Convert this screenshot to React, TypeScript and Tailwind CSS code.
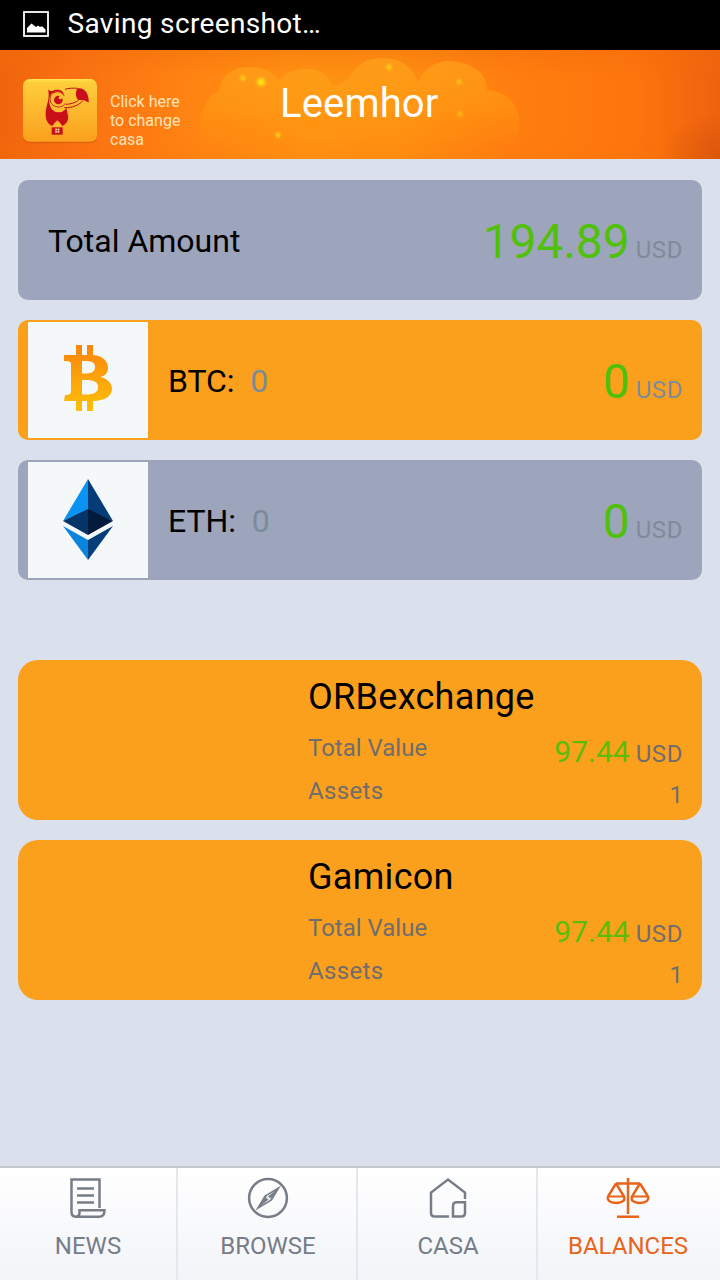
import type { ReactNode } from "react";

function StatusBar() {
  return (
    <div className="flex h-[50px] shrink-0 items-center bg-black pl-[23px] text-white">
      <svg width="26" height="26" viewBox="0 0 26 26" className="mt-[-2px]">
        <rect x="1" y="1" width="24" height="24" fill="none" stroke="#fff" strokeWidth="1.8" />
        <path d="M4 21.5V17l4.500-4.500 4.500 3.500 2-1.500 2 1.500 2-.7 3.500 3.200v3Z" fill="#fff" />
      </svg>
      <span className="mt-[-3px] ml-[18.500px] text-[28px] leading-[34px] tracking-[0.35px] whitespace-nowrap">
        Saving screenshot…
      </span>
    </div>
  );
}

function Toucan() {
  return (
    <svg width="78" height="68" viewBox="33 21 234 204" className="-ml-[2px] block shrink-0">
      <defs>
        <linearGradient id="tile" x1="0" y1="0" x2="0" y2="1">
          <stop offset="0" stopColor="#ffdc3c" />
          <stop offset="0.08" stopColor="#fdcb3b" />
          <stop offset="1" stopColor="#fba01d" />
        </linearGradient>
      </defs>
      <rect x="39" y="33" width="222" height="187" rx="20" fill="#b84a08" opacity="0.35" />
      <rect x="39" y="27" width="222" height="188" rx="20" fill="url(#tile)" />
      <path d="M55 29.500H245" stroke="#ffe75a" strokeWidth="3" />
      <g fill="#c9101a">
        <path d="M114 57c3 5 7 7 13 6 8-4 22-6 31 2l5 9c-8-8-19-12-28-9-14 5-19 18-16 31 3 17 16 24 32 21 8-1 14-4 18-8 1 20 11 33 2 47-4 6-9 9-14 12l-7-10-8-7-8 7-7 10c-13-5-19-16-20-30-1-28 9-42 9-60 0-8 0-13-2-21Z" />
        <ellipse cx="146" cy="97" rx="28" ry="30" fill="#fdbd33" />
        <path d="M124 74c-9 17-1 32 15 36 13 3 23-2 26-10" fill="none" stroke="#c9101a" strokeWidth="2.500" />
        <circle cx="145" cy="90" r="13" />
        <circle cx="151" cy="83" r="5" fill="#fdc837" />
        <path d="M128 71c10-9 27-8 34 6" fill="none" stroke="#c9101a" strokeWidth="3" />
        <path d="M201 56c22-6 37 16 35 42-10-8-19-9-32-8l-5-9c-2-9-2-16 2-25Z" />
        <path d="M165 58c11-4 26-4 38-3M167 103c16 0 31-6 38-12M163 113c24 1 42-7 55-20" fill="none" stroke="#c9101a" strokeWidth="3" />
        <path d="M125 172h33v22h-33Z" />
        <path d="m125 171 17-14 16 14Z" fill="#fdb92f" />
        <rect x="136" y="176" width="12" height="12" fill="#fff0b0" />
        <path d="M142 175v14M135 182h14" stroke="#c9101a" strokeWidth="2" />
      </g>
    </svg>
  );
}

function Header() {
  return (
    <header className="relative h-[109px] shrink-0 overflow-hidden bg-[linear-gradient(90deg,#ef650d_0%,#fa7012_10%,#ff8412_27%,#ff9212_42%,#ff9012_55%,#ff7f10_70%,#fd750d_88%,#ee620f_100%)] text-white">
      <svg width="720" height="109" viewBox="0 50 720 109" className="absolute inset-0">
        <defs>
          <linearGradient id="cloud" x1="0" y1="0" x2="0" y2="1">
            <stop offset="0" stopColor="#ffa71e" stopOpacity="0.6" />
            <stop offset="0.5" stopColor="#ffa414" stopOpacity="0.38" />
            <stop offset="0.9" stopColor="#ff940c" stopOpacity="0" />
          </linearGradient>
          <radialGradient id="glow">
            <stop offset="0" stopColor="#fff01c" />
            <stop offset="0.4" stopColor="#ffdc18" stopOpacity="0.75" />
            <stop offset="1" stopColor="#ffb414" stopOpacity="0" />
          </radialGradient>
          <linearGradient id="shade" x1="0" y1="0" x2="0" y2="1">
            <stop offset="0" stopColor="#ef6908" stopOpacity="0.35" />
            <stop offset="0.25" stopColor="#ef6908" stopOpacity="0" />
            <stop offset="0.8" stopColor="#f87000" stopOpacity="0" />
            <stop offset="1" stopColor="#f87000" stopOpacity="0.15" />
          </linearGradient>
          <radialGradient id="corner">
            <stop offset="0" stopColor="#cc4e0c" stopOpacity="0.6" />
            <stop offset="1" stopColor="#cc4e0c" stopOpacity="0" />
          </radialGradient>
        </defs>
        <rect y="50" width="720" height="109" fill="url(#shade)" />
        <ellipse cx="720" cy="158" rx="60" ry="45" fill="url(#corner)" />
        <path
          d="M210 159C196 146 194 103 219 91Q222 67 249 67Q272 67 278 81Q288 69 308 69Q325 69 333 86Q343 85 351 76Q360 58 382 58Q410 58 418 83Q427 61 450 61Q486 64 487 90Q513 91 519 117Q519 146 506 159Z"
          fill="url(#cloud)"
        />
        <circle cx="261" cy="82" r="7" fill="url(#glow)" />
        <circle cx="243" cy="78" r="5" fill="url(#glow)" opacity="0.65" />
        <circle cx="278" cy="135" r="4.500" fill="url(#glow)" opacity="0.7" />
        <circle cx="389" cy="67" r="5" fill="url(#glow)" opacity="0.6" />
        <circle cx="459" cy="82" r="5" fill="url(#glow)" opacity="0.5" />
        <circle cx="460" cy="114" r="5" fill="url(#glow)" opacity="0.4" />
      </svg>
      <div className="relative flex h-full items-start pl-[23px]">
        <div className="mt-[27px]">
          <Toucan />
        </div>
        <p className="mt-[42px] ml-[11px] w-[90px] text-[16px] leading-[19px] text-[#ffe4b8]">
          Click here
          <br />
          to change
          <br />
          casa
        </p>
        <h1 className="mt-[30px] ml-[80px] text-[40px] leading-[48px] tracking-[0.15px]">Leemhor</h1>
      </div>
    </header>
  );
}

function Amount({ value }: { value: string }) {
  return (
    <div className="ml-auto flex items-baseline pt-[3px] pr-[19px]">
      <span className="text-[48px] leading-[56px] tracking-[-0.1px] text-[#50c008]">{value}</span>
      <span className="ml-[6px] text-[24px] tracking-[0.6px] text-[#7d8b9a]">USD</span>
    </div>
  );
}

function CoinRow({ name, tone, icon }: { name: string; tone: string; icon: ReactNode }) {
  return (
    <section className={`flex h-[120px] items-center rounded-[10px] ${tone}`}>
      <div className="ml-[10px] flex h-[116px] w-[120px] items-center justify-center bg-[#f4f8f9]">{icon}</div>
      <div className="mt-[2px] ml-[20px] flex text-[32px] leading-[38px]">
        <span className="tracking-[-0.1px] text-black">{name}:</span>
        <span className="ml-[16px] text-[#7b8b98]">0</span>
      </div>
      <Amount value="0" />
    </section>
  );
}

function Bitcoin() {
  return (
    <svg width="50" height="68" viewBox="0 0 50 68" className="mt-[-4px]">
      <defs>
        <linearGradient id="btc" x1="0" y1="0" x2="0" y2="1">
          <stop offset="0" stopColor="#fb850b" />
          <stop offset="1" stopColor="#fcc009" />
        </linearGradient>
      </defs>
      <path
        fill="url(#btc)"
        fillRule="evenodd"
        d="M13 1h6v10h5V1h6v10C41 12 45 18 45 24c0 5-3 8-8 9 7 1 12 6 12 12 0 7-7 12-19 12v10h-6V57h-5v10h-6V57H1l1-6c5 0 6-1 6-5V20c0-2-1-3-7-3v-6h12ZM19 17v12.500h3c7 0 10-2 10-6.500 0-4-3-6-9-6ZM19 36v14.500h4c8 0 12-2 12-7.500 0-5-4-7-12-7Z"
      />
    </svg>
  );
}

function Ethereum() {
  return (
    <svg width="50" height="82" viewBox="0 0 50 82">
      <path fill="#0b93f3" d="M25 0 0 42l25-11Z" />
      <path fill="#043c78" d="m25 0 25 42-25-11Z" />
      <path fill="#043468" d="m0 42 25-12v26Z" />
      <path fill="#021a3c" d="m50 42-25-12v26Z" />
      <path fill="#0b84de" d="m0 47 25 14v20Z" />
      <path fill="#043e79" d="M50 47 25 61v20Z" />
    </svg>
  );
}

function AssetCard({ name }: { name: string }) {
  return (
    <section className="h-[160px] rounded-[20px] bg-[#fba01d] pr-[19px] pl-[290px] text-[24px] text-[#716d6c]">
      <h2 className="pt-[15px] text-[36px] leading-[44px] tracking-[0.3px] text-black">{name}</h2>
      <div className="flex justify-between">
        <div>
          <div className="mt-[14px] leading-[30px]">Total Value</div>
          <div className="mt-[13px] leading-[30px] tracking-[0.35px]">Assets</div>
        </div>
        <div className="text-right">
          <div className="mt-[14px] flex items-baseline leading-[38px]">
            <span className="text-[30px] text-[#5cbd08]">97.44</span>
            <span className="ml-[6px] tracking-[0.6px]">USD</span>
          </div>
          <div className="mt-[7px] leading-[30px]">1</div>
        </div>
      </div>
    </section>
  );
}

function NavItem({ label, icon, className }: { label: string; icon: ReactNode; className: string }) {
  return (
    <a className={`flex shrink-0 flex-col items-center pt-[9px] ${className}`}>
      {icon}
      <span className="mt-[12px] text-[24px] leading-[30px]">{label}</span>
    </a>
  );
}

const stroke = {
  width: 44,
  height: 42,
  viewBox: "0 0 44 42",
  fill: "none",
  stroke: "currentColor",
  strokeWidth: 2.5,
};

function BottomNav() {
  return (
    <nav className="flex h-[114px] shrink-0 border-t-2 border-[#c4c8cd] bg-gradient-to-b from-white to-[#f2f4f8]">
      <NavItem
        label="NEWS"
        className="w-[178px] border-r-2 border-[#e4e7ee] text-[#777d87]"
        icon={
          <svg {...stroke}>
            <path d="M33.500 31V2.500H5.500V35q0 4.700 4.500 4.700H33q5.500 0 5.500-6.500H13.500v2.500q0 4-4 4M11 11.500h17M11 18.500h17M11 25.500h17" />
          </svg>
        }
      />
      <NavItem
        label="BROWSE"
        className="w-[180px] border-r-2 border-[#e4e7ee] pl-[2px] text-[#777d87]"
        icon={
          <svg {...stroke}>
            <circle cx="22" cy="21" r="18.900" />
            <path
              fill="currentColor"
              fillRule="evenodd"
              stroke="none"
              d="M35 8.500 26 23.500 9.500 33.500 18.500 18.500ZM29.500 13.500 20.800 19l-1 2.500 1.500-.8 1.500-1.900ZM15.500 28l8.700-5.300 1-2.500-1.500.8-1.600 1.900ZM22 19.800a1.200 1.200 0 1 0 .1 0Z"
            />
          </svg>
        }
      />
      <NavItem
        label="CASA"
        className="w-[180px] border-r-2 border-[#e4e7ee] pl-[2px] text-[#777d87]"
        icon={
          <svg {...stroke}>
            <path d="M23 39.500H8.500q-3.500 0-3.500-3.500V15.500L22 2.500l17 13V22M27 39.500V29q0-3.700 3.700-3.700H39V36q0 3.500-3.500 3.500Z" />
          </svg>
        }
      />
      <NavItem
        label="BALANCES"
        className="w-[182px] pr-[2px] text-[#e8641b]"
        icon={
          <svg {...stroke}>
            <path d="M22 1v36M11 39.700h22M10 6.500h24M10 6.500 2 19.500q-1.500 6 8 6.500 10-.5 8-6.500L10 6.500M34 6.500l8 13q1.500 6-8 6.500-10-.5-8-6.500l8-13" />
            <path d="M2 19.500h16M26 19.500h16" strokeWidth="2" />
          </svg>
        }
      />
    </nav>
  );
}

export default function App() {
  return (
    <div className="flex h-[1280px] w-[720px] flex-col overflow-hidden bg-[#dae0ec] font-[Roboto,sans-serif]">
      <StatusBar />
      <Header />
      <main className="flex flex-1 flex-col gap-[20px] px-[18px] pt-[21px]">
        <section className="flex h-[120px] items-center rounded-[10px] bg-[#9da5bc]">
          <span className="mt-[2px] ml-[30px] text-[32px] leading-[38px] text-black">Total Amount</span>
          <Amount value="194.89" />
        </section>
        <CoinRow name="BTC" tone="bg-[#fba01d]" icon={<Bitcoin />} />
        <CoinRow name="ETH" tone="bg-[#9da5bc]" icon={<Ethereum />} />
        <div className="mt-[60px] flex flex-col gap-[20px]">
          <AssetCard name="ORBexchange" />
          <AssetCard name="Gamicon" />
        </div>
      </main>
      <BottomNav />
    </div>
  );
}
